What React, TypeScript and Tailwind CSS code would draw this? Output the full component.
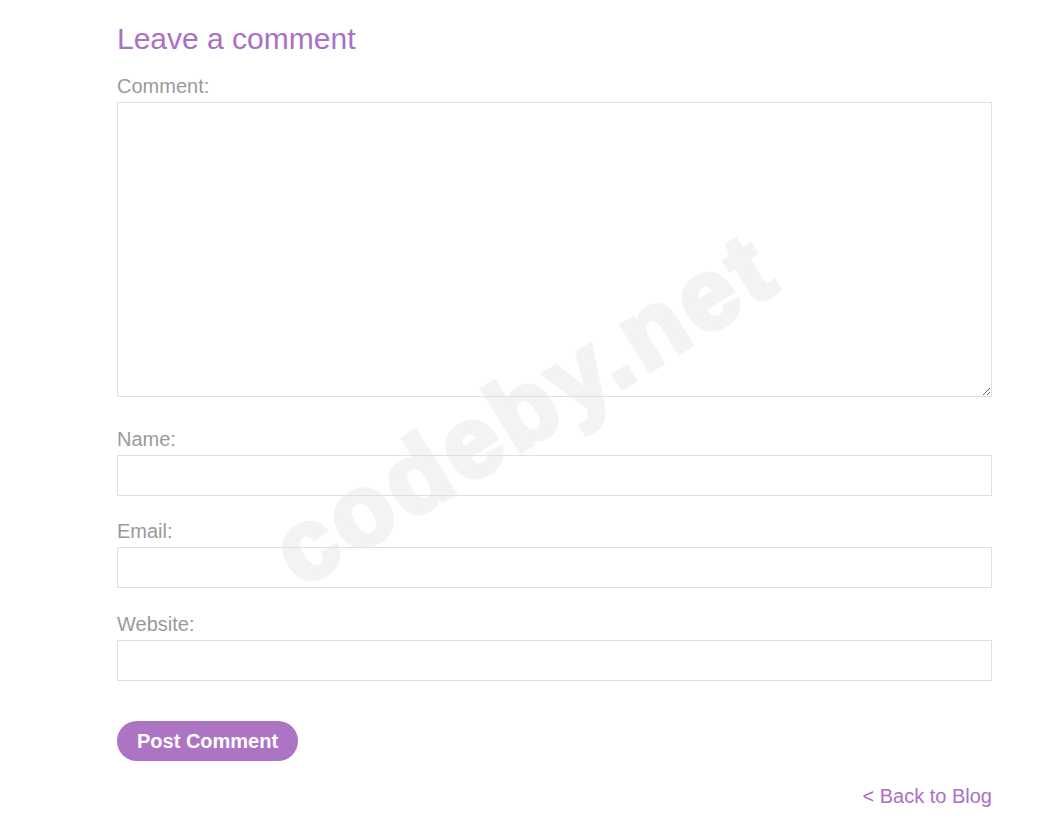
import React from "react";

export default function App() {
  const labelCls = "block text-[20px] leading-[24px] text-[#9a9a9a]";
  const inputCls = "block w-full h-[41px] border border-[#e0e0e0] bg-transparent outline-none";
  return (
    <div className="relative min-h-[833px] w-[1044px] bg-white overflow-hidden" style={{ fontFamily: '"Liberation Sans", Arial, sans-serif' }}>
      <div className="pointer-events-none absolute left-[524px] top-[408px] -translate-x-1/2 -translate-y-1/2 -rotate-[32deg] whitespace-nowrap text-[100px] font-bold leading-none tracking-[5px] text-[#f3f3f3] [-webkit-text-stroke:5px_#f3f3f3] select-none">
        codeby.net
      </div>
      <div className="relative w-[875px] ml-[117px] pt-[21px]">
        <h2 className="text-[30px] leading-[36px] text-[#ab70c3]">Leave a comment</h2>
        <form className="flex flex-col" onSubmit={(e) => e.preventDefault()}>
          <label className={`${labelCls} mt-[17px]`}>Comment:</label>
          <textarea className="mt-[4px] block w-full h-[295px] border border-[#e0e0e0] bg-transparent outline-none resize-y" />
          <label className={`${labelCls} mt-[30px]`}>Name:</label>
          <input className={`${inputCls} mt-[4px]`} />
          <label className={`${labelCls} mt-[23px]`}>Email:</label>
          <input className={`${inputCls} mt-[4px]`} />
          <label className={`${labelCls} mt-[24px]`}>Website:</label>
          <input className={`${inputCls} mt-[4px]`} />
          <div className="mt-[40px]">
            <button type="submit" className="h-[40px] rounded-full bg-[#ae74c4] px-[20px] text-[20px] font-bold leading-[24px] text-white">
              Post Comment
            </button>
          </div>
        </form>
        <div className="mt-[23px] flex justify-end">
          <a href="#" className="text-[20px] leading-[24px] text-[#ab70c3]">&lt; Back to Blog</a>
        </div>
      </div>
    </div>
  );
}
